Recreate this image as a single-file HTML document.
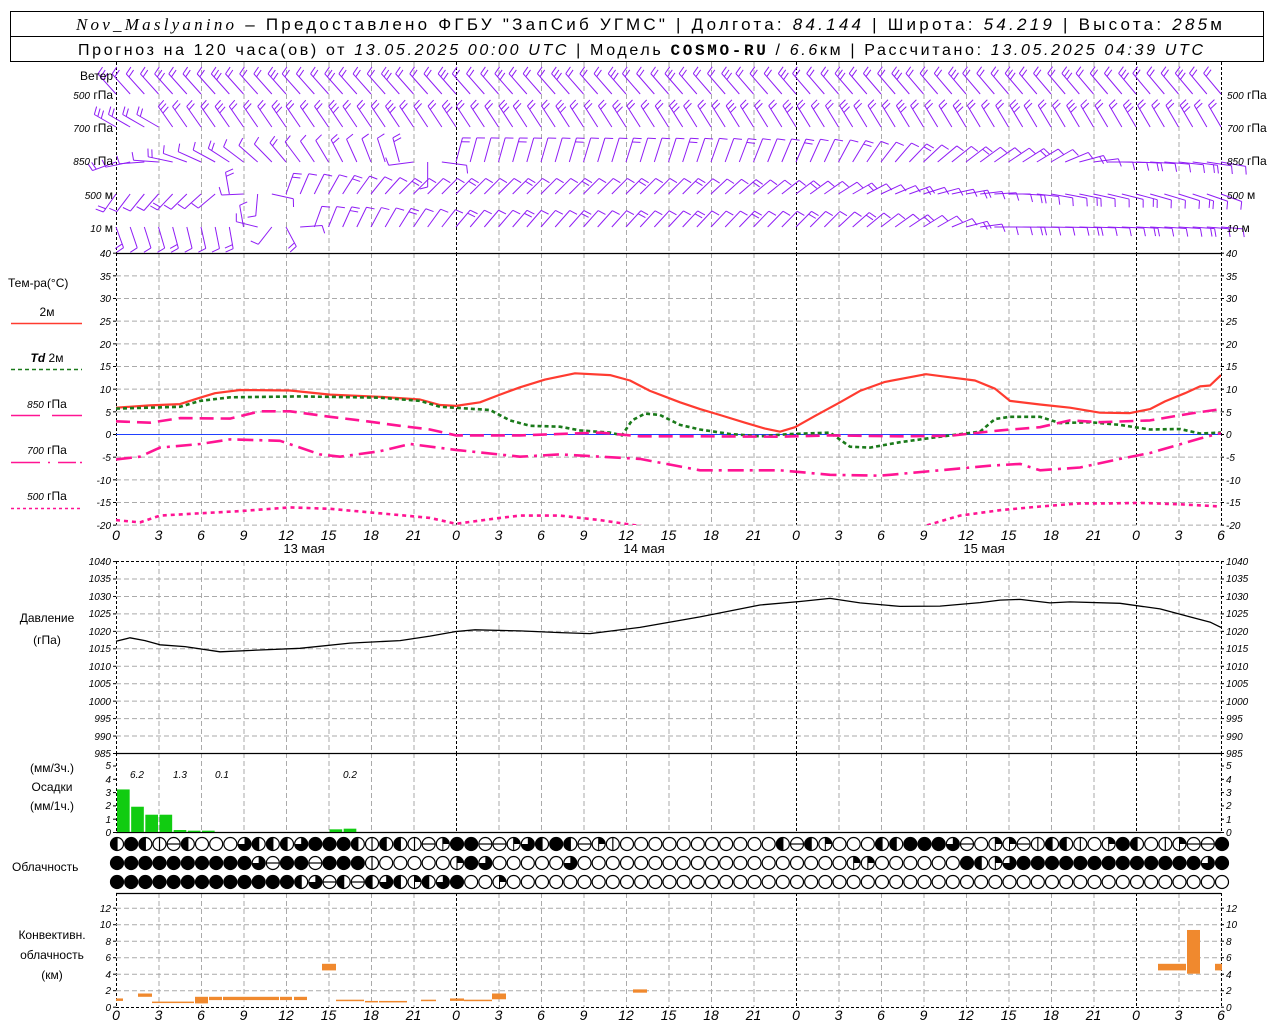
<!DOCTYPE html>
<html><head><meta charset="utf-8">
<style>
html,body{margin:0;padding:0;background:#fff;}
svg{display:block;}
text{font-family:"Liberation Sans","DejaVu Sans",sans-serif;fill:#000;}
.n{font-style:italic;font-size:10px;}
.t{font-style:italic;font-size:14px;text-anchor:middle;}
.l{font-size:12px;}
</style></head><body>
<svg id="s" xmlns="http://www.w3.org/2000/svg" width="1280" height="1024" viewBox="0 0 1280 1024">
<defs><clipPath id="cp"><rect x="116" y="253" width="1105" height="272"/></clipPath></defs>
<rect x="10.5" y="11.5" width="1253" height="50" fill="#fff" stroke="#000"/>
<line x1="10" y1="36.5" x2="1264" y2="36.5" stroke="#000"/>
<text x="76" y="30" font-size="17" textLength="1146" lengthAdjust="spacing"><tspan font-style="italic" font-family="Liberation Serif">Nov_Maslyanino</tspan> – Предоставлено ФГБУ "ЗапСиб УГМС" | Долгота: <tspan font-style="italic">84.144</tspan> | Широта: <tspan font-style="italic">54.219</tspan> | Высота: <tspan font-style="italic">285</tspan>м</text>
<text x="78" y="55" font-size="16" textLength="1125" lengthAdjust="spacing">Прогноз на 120 часа(ов) от <tspan font-style="italic">13.05.2025 00:00 UTC</tspan> | Модель <tspan font-weight="bold" font-family="Liberation Mono">COSMO-RU</tspan> / <tspan font-style="italic">6.6</tspan>км | Рассчитано: <tspan font-style="italic">13.05.2025 04:39 UTC</tspan></text>
<g id="g"></g>
<g class="l">
<text x="113" y="80" text-anchor="end">Ветер</text>
<text x="113" y="99" text-anchor="end"><tspan class="n">500</tspan> гПа</text>
<text x="113" y="132" text-anchor="end"><tspan class="n">700</tspan> гПа</text>
<text x="113" y="165" text-anchor="end"><tspan class="n">850</tspan> гПа</text>
<text x="113" y="199" text-anchor="end"><tspan class="n">500</tspan> м</text>
<text x="113" y="232" text-anchor="end"><tspan class="n">10</tspan>   м</text>
<text x="1227" y="99"><tspan class="n">500</tspan> гПа</text>
<text x="1227" y="132"><tspan class="n">700</tspan> гПа</text>
<text x="1227" y="165"><tspan class="n">850</tspan> гПа</text>
<text x="1227" y="199"><tspan class="n">500</tspan> м</text>
<text x="1227" y="232"><tspan class="n">10</tspan>   м</text>
<text x="8" y="287">Тем-ра(°C)</text>
<text x="47" y="316" text-anchor="middle">2м</text>
<text x="47" y="362" text-anchor="middle"><tspan font-style="italic" font-weight="bold">Td</tspan>  2м</text>
<text x="47" y="408" text-anchor="middle"><tspan class="n">850</tspan> гПа</text>
<text x="47" y="454" text-anchor="middle"><tspan class="n">700</tspan> гПа</text>
<text x="47" y="500" text-anchor="middle"><tspan class="n">500</tspan> гПа</text>
<text x="47" y="622" text-anchor="middle">Давление</text>
<text x="47" y="644" text-anchor="middle">(гПа)</text>
<text x="52" y="772" text-anchor="middle">(мм/3ч.)</text>
<text x="52" y="791" text-anchor="middle">Осадки</text>
<text x="52" y="810" text-anchor="middle">(мм/1ч.)</text>
<text x="12" y="871">Облачность</text>
<text x="52" y="939" text-anchor="middle">Конвективн.</text>
<text x="52" y="959" text-anchor="middle">облачность</text>
<text x="52" y="979" text-anchor="middle">(км)</text>
<text x="304" y="553" text-anchor="middle" font-size="13">13 мая</text>
<text x="644" y="553" text-anchor="middle" font-size="13">14 мая</text>
<text x="984" y="553" text-anchor="middle" font-size="13">15 мая</text>
</g>
<g class="n" font-size="13" font-style="italic">
<text x="137" y="778" text-anchor="middle">6.2</text>
<text x="180" y="778" text-anchor="middle">1.3</text>
<text x="222" y="778" text-anchor="middle">0.1</text>
<text x="350" y="778" text-anchor="middle">0.2</text>
</g>
<g class="n" text-anchor="end">
<text x="111" y="257">40</text><text x="111" y="280">35</text><text x="111" y="302">30</text><text x="111" y="325">25</text><text x="111" y="348">20</text><text x="111" y="370">15</text><text x="111" y="393">10</text><text x="111" y="416">5</text><text x="111" y="438">0</text><text x="111" y="461">-5</text><text x="111" y="484">-10</text><text x="111" y="506">-15</text><text x="111" y="529">-20</text>
<text x="111" y="565">1040</text><text x="111" y="582">1035</text><text x="111" y="600">1030</text><text x="111" y="617">1025</text><text x="111" y="635">1020</text><text x="111" y="652">1015</text><text x="111" y="670">1010</text><text x="111" y="687">1005</text><text x="111" y="705">1000</text><text x="111" y="722">995</text><text x="111" y="740">990</text><text x="111" y="757">985</text>
<text x="111" y="769">5</text><text x="111" y="783">4</text><text x="111" y="796">3</text><text x="111" y="809">2</text><text x="111" y="823">1</text><text x="111" y="836">0</text>
<text x="111" y="912">12</text><text x="111" y="928">10</text><text x="111" y="945">8</text><text x="111" y="961">6</text><text x="111" y="978">4</text><text x="111" y="994">2</text><text x="111" y="1011">0</text>
</g>
<g class="n">
<text x="1226" y="257">40</text><text x="1226" y="280">35</text><text x="1226" y="302">30</text><text x="1226" y="325">25</text><text x="1226" y="348">20</text><text x="1226" y="370">15</text><text x="1226" y="393">10</text><text x="1226" y="416">5</text><text x="1226" y="438">0</text><text x="1226" y="461">-5</text><text x="1226" y="484">-10</text><text x="1226" y="506">-15</text><text x="1226" y="529">-20</text>
<text x="1226" y="565">1040</text><text x="1226" y="582">1035</text><text x="1226" y="600">1030</text><text x="1226" y="617">1025</text><text x="1226" y="635">1020</text><text x="1226" y="652">1015</text><text x="1226" y="670">1010</text><text x="1226" y="687">1005</text><text x="1226" y="705">1000</text><text x="1226" y="722">995</text><text x="1226" y="740">990</text><text x="1226" y="757">985</text>
<text x="1226" y="769">5</text><text x="1226" y="783">4</text><text x="1226" y="796">3</text><text x="1226" y="809">2</text><text x="1226" y="823">1</text><text x="1226" y="836">0</text>
<text x="1226" y="912">12</text><text x="1226" y="928">10</text><text x="1226" y="945">8</text><text x="1226" y="961">6</text><text x="1226" y="978">4</text><text x="1226" y="994">2</text><text x="1226" y="1011">0</text>
</g>
<g class="t">
<text x="116" y="540">0</text><text x="158.5" y="540">3</text><text x="201" y="540">6</text><text x="243.5" y="540">9</text><text x="286" y="540">12</text><text x="328.5" y="540">15</text><text x="371" y="540">18</text><text x="413.5" y="540">21</text><text x="456" y="540">0</text><text x="498.5" y="540">3</text><text x="541" y="540">6</text><text x="583.5" y="540">9</text><text x="626" y="540">12</text><text x="668.5" y="540">15</text><text x="711" y="540">18</text><text x="753.5" y="540">21</text><text x="796" y="540">0</text><text x="838.5" y="540">3</text><text x="881" y="540">6</text><text x="923.5" y="540">9</text><text x="966" y="540">12</text><text x="1008.5" y="540">15</text><text x="1051" y="540">18</text><text x="1093.5" y="540">21</text><text x="1136" y="540">0</text><text x="1178.5" y="540">3</text><text x="1221" y="540">6</text>
<text x="116" y="1020">0</text><text x="158.5" y="1020">3</text><text x="201" y="1020">6</text><text x="243.5" y="1020">9</text><text x="286" y="1020">12</text><text x="328.5" y="1020">15</text><text x="371" y="1020">18</text><text x="413.5" y="1020">21</text><text x="456" y="1020">0</text><text x="498.5" y="1020">3</text><text x="541" y="1020">6</text><text x="583.5" y="1020">9</text><text x="626" y="1020">12</text><text x="668.5" y="1020">15</text><text x="711" y="1020">18</text><text x="753.5" y="1020">21</text><text x="796" y="1020">0</text><text x="838.5" y="1020">3</text><text x="881" y="1020">6</text><text x="923.5" y="1020">9</text><text x="966" y="1020">12</text><text x="1008.5" y="1020">15</text><text x="1051" y="1020">18</text><text x="1093.5" y="1020">21</text><text x="1136" y="1020">0</text><text x="1178.5" y="1020">3</text><text x="1221" y="1020">6</text>
</g>
</svg>
<script>
(function(){
var S='http://www.w3.org/2000/svg',G=document.getElementById('g');
function el(n,a,p){var e=document.createElementNS(S,n);for(var k in a)e.setAttribute(k,a[k]);(p||G).appendChild(e);return e;}
function ln(x1,y1,x2,y2,c,w,d){el('line',{x1:x1,y1:y1,x2:x2,y2:y2,stroke:c,'stroke-width':w||1,'stroke-dasharray':d||'none'});}
var X0=116,DX=14.1667,X1=1221;
function xh(h){return X0+h*DX;}
function ty(v){return 434-v*4.533;}
function py(p){return 753-(p-985)*3.49;}
function cy(k){return 1006.7-k*8.25;}
var panels=[[62,253],[253,525],[561,753],[753,832],[893,1007]];
for(var h=3;h<78;h+=3){if(h%24==0)continue;var x=xh(h)+.5;panels.forEach(function(p){ln(x,p[0],x,p[1],'#aaa',1,'5,3');});}
[0,24,48,72,78].forEach(function(h){var x=xh(h)+.5;panels.forEach(function(p){ln(x,p[0],x,p[1],'#000',1,'3,2');});});
for(var v=35;v>=-20;v-=5){if(v==0)continue;ln(X0,ty(v)+.5,X1,ty(v)+.5,'#aaa',1,'5,3');}
ln(X0,ty(0)+.5,X1,ty(0)+.5,'#2040ff',1);
for(var p=1035;p>985;p-=5)ln(X0,py(p)+.5,X1,py(p)+.5,'#aaa',1,'5,3');
for(var k=2;k<=12;k+=2)ln(X0,cy(k)+.5,X1,cy(k)+.5,'#aaa',1,'5,3');
ln(X0,253.5,X1,253.5,'#000',1.3);ln(X0,561.5,X1,561.5,'#000',1,'3,2');ln(X0,753.5,X1,753.5,'#000',1.3);
ln(X0,832.5,X1,832.5,'#000',1.3);ln(X0,893.5,X1,893.5,'#000',1.3);ln(X0,1007.5,X1,1007.5,'#000',1,'3,2');
function ticks(ys){ys.forEach(function(y){ln(X0-3,y+.5,X0,y+.5,'#000');ln(X1,y+.5,X1+3,y+.5,'#000');});}
var a=[];for(v=40;v>=-20;v-=5)a.push(ty(v));ticks(a);a=[];for(p=1040;p>=985;p-=5)a.push(py(p));ticks(a);
a=[];for(k=0;k<=5;k++)a.push(832-k*13.3);ticks(a);a=[];for(k=0;k<=12;k+=2)a.push(cy(k));ticks(a);
ln(11,323.5,82,323.5,'#ff3b30',1.5);ln(11,369.5,82,369.5,'#1a7a1a',1.5,'4,3');
ln(11,415.5,40,415.5,'#ff1493',1.5);ln(52,415.5,82,415.5,'#ff1493',1.5);
ln(11,462.5,40,462.5,'#ff1493',1.5);ln(48,462.5,50,462.5,'#ff1493',1.5);ln(58,462.5,76,462.5,'#ff1493',1.5);ln(80,462.5,82,462.5,'#ff1493',1.5);
ln(11,508.5,82,508.5,'#ff1493',1.5,'3,3');
function curve(pts,f,c,w,d,clip){var s='';pts.forEach(function(q,i){s+=(i?'L':'M')+q[0]+','+f(q[1]).toFixed(1);});var e=el('path',{d:s,fill:'none',stroke:c,'stroke-width':w,'stroke-dasharray':d||'none','stroke-linejoin':'round'});if(clip)e.setAttribute('clip-path','url(#cp)');}
curve([[116,5.8],[150,6.3],[180,6.6],[200,8],[215,9],[240,9.7],[290,9.6],[330,8.7],[380,8.2],[420,7.6],[440,6.4],[456,6.2],[480,7],[500,8.7],[520,10.3],[545,12],[575,13.4],[610,13],[630,11.8],[650,9.5],[680,7],[700,5.5],[720,4.2],[745,2.5],[765,1.2],[780,0.5],[795,1.5],[815,4],[840,7],[860,9.5],[885,11.5],[926,13.2],[950,12.5],[975,11.8],[995,10],[1010,7.3],[1040,6.5],[1070,5.8],[1100,4.7],[1130,4.6],[1150,5.5],[1165,7.2],[1185,9],[1200,10.5],[1210,10.7],[1221,13]],ty,'#ff3b30',2.2,null,1);
curve([[116,5.6],[180,6],[200,7.3],[230,8.1],[300,8.3],[380,8],[420,7.3],[440,6],[490,5.3],[510,3],[530,1.8],[560,1.6],[580,0.8],[610,0.3],[622,-0.3],[632,3],[645,4.5],[660,4.2],[680,2],[700,1],[730,0],[760,-0.5],[790,0],[830,0.3],[850,-2.8],[870,-3],[900,-1.8],[940,-0.6],[980,0.5],[995,3.3],[1010,3.8],[1040,3.8],[1060,2.4],[1090,2.6],[1120,2],[1150,1],[1180,1.1],[1200,0.1],[1221,0.3]],ty,'#1a7a1a',2.6,'4,3',1);
curve([[116,2.8],[150,2.5],[180,3.5],[230,3.4],[260,5],[290,5],[330,3.8],[360,3],[400,1.8],[430,1],[456,-0.3],[520,-0.3],[600,0.3],[640,-0.5],[700,-0.5],[780,-0.6],[830,-0.3],[900,-0.5],[950,-0.4],[1000,0.8],[1040,1.5],[1070,3],[1100,2.6],[1150,3],[1190,4.5],[1221,5.5]],ty,'#ff1493',2.6,'14,7',1);
curve([[116,-5.6],[140,-5],[160,-3],[200,-2.2],[230,-1.2],[280,-1.5],[320,-4.5],[340,-5],[380,-3.8],[410,-2.2],[456,-3.5],[520,-5],[560,-4.5],[640,-5.5],[700,-8],[780,-8],[830,-9],[880,-9.2],[940,-8],[990,-7],[1020,-6.6],[1040,-8],[1080,-7.4],[1120,-5.5],[1150,-4.2],[1200,-1],[1221,0.2]],ty,'#ff1493',2.6,'16,6,3,6',1);
curve([[116,-19],[140,-19.5],[160,-18],[200,-17.5],[240,-17],[290,-16.2],[330,-16.5],[380,-17.5],[430,-18.5],[456,-19.8],[500,-18.5],[520,-18],[560,-18],[600,-19],[640,-20.3],[700,-22],[880,-22],[926,-20.2],[960,-18],[1000,-16.8],[1040,-16],[1080,-15.3],[1110,-15.3],[1140,-15.2],[1180,-15.5],[1221,-16]],ty,'#ff1493',2.6,'4,4',1);
curve([[116,1017],[130,1018],[145,1017.2],[160,1016],[185,1015.5],[220,1014],[260,1014.5],[300,1015],[350,1016.5],[400,1017.2],[430,1018.5],[456,1019.8],[475,1020.3],[520,1020],[560,1019.5],[590,1019.2],[640,1021],[700,1024],[760,1027.4],[800,1028.4],[830,1029.3],[860,1028],[900,1027],[940,1027.1],[980,1028.1],[1000,1028.8],[1020,1029],[1050,1028],[1070,1028.3],[1120,1027.9],[1160,1026.3],[1190,1024],[1210,1022.5],[1221,1021]],py,'#000',1.3);
[[0,3.2],[1,1.9],[2,1.3],[3,1.3],[4,0.15],[5,0.1],[6,0.1],[15,0.2],[16,0.25]].forEach(function(b){var h2=b[1]*13.3;el('rect',{x:xh(b[0])+1,y:832-h2,width:DX-1.5,height:h2,fill:'#11cc11'});});
[[116,123,0.7,1],[138,152,1.2,1.6],[152,194,0.5,0.62],[195,208,0.4,1.2],[209,222,0.8,1.2],[223,279,0.8,1.2],[280,292,0.8,1.2],[294,307,0.8,1.2],[322,336,4.4,5.2],[336,364,0.7,0.85],[365,378,0.55,0.7],[379,407,0.55,0.7],[421,436,0.7,0.85],[450,464,0.7,1],[464,492,0.7,0.85],[492,506,0.9,1.6],[633,647,1.7,2.1],[1158,1186,4.4,5.2],[1187,1200,4,9.3],[1215,1222,4.4,5.2]].forEach(function(b){el('rect',{x:b[0],y:cy(b[3]),width:b[1]-b[0],height:Math.max(1.5,(b[3]-b[2])*8.25),fill:'#f0892e'});});
var rows=['HFHITHOOOQHHHQFFFHIHHITqFFTTqQHFHTqIOOOOOOOOOOOHTHqOOOHHFFFQTOqqTIHHIOqFHOIqTTF',
'FFFFFFFFFFQTFFTFFFIOOOOOqFQOOOOOQOOOOOOOOOOOOOOOOOOOqqOOOOOOFHqQFFFFFFFFFFFFFQF',
'FFFFFFFFFFFFFHQTHTHQHqHQFOOqOOOOOOOOOOOOOOOOOOOOOOOOOOOOOOOOOOOOOOOOOOOOOOOOOOO'];
var ry=[844,863,882],r=6.5;
rows.forEach(function(s,ri){for(var i=0;i<79;i++){var c=s.charAt(i)||'O',x=xh(i)+1,y=ry[ri];
el('circle',{cx:x,cy:y,r:r,fill:c=='F'?'#000':'#fff',stroke:'#000','stroke-width':1.2});
if(c=='H'){el('path',{d:'M'+x+','+(y-r)+'A'+r+','+r+' 0 0 0 '+x+','+(y+r)+'Z',fill:'#000'});}
if(c=='I'||c=='H')ln(x,y-r,x,y+r,'#000',1.2);
if(c=='T')ln(x-r,y,x+r,y,'#000',1.2);
if(c=='Q'){el('path',{d:'M'+x+','+y+'L'+x+','+(y-r)+'A'+r+','+r+' 0 1 1 '+(x-r)+','+y+'Z',fill:'#000'});}
if(c=='q'){el('path',{d:'M'+x+','+y+'L'+x+','+(y-r)+'A'+r+','+r+' 0 0 1 '+(x+r)+','+y+'Z',fill:'#000'});ln(x,y-r,x,y+r,'#000',1);}
}});
function itp(k,h){for(var i=0;i<k.length-1;i++){if(h<=k[i+1][0]){var t=(h-k[i][0])/(k[i+1][0]-k[i][0]);return k[i][1]+t*(k[i+1][1]-k[i][1]);}}return k[k.length-1][1];}
var L=[
{y:94,d:[[0,318],[78,320]],n:[[0,2],[78,2]],len:27},
{y:127,d:[[0,300],[3,300],[4,325],[40,328],[78,330]],n:[[0,2],[78,2]],len:25},
{y:162,d:[[0,250],[5,290],[12,320],[20,345],[24,15],[40,18],[50,25],[58,50],[66,60],[70,90],[78,100]],n:[[0,1],[78,1]],len:25},
{y:194,d:[[0,215],[7,230],[8,350],[12,20],[20,45],[40,45],[50,55],[60,80],[66,100],[78,110]],n:[[0,1],[78,1]],len:22},
{y:227,d:[[0,160],[8,170],[9,350],[14,20],[24,40],[50,45],[58,60],[62,90],[78,95]],n:[[0,1],[78,1]],len:22}];
L.forEach(function(lv){for(var h=0;h<=78;h++){var d=itp(lv.d,h)*Math.PI/180,sx=Math.sin(d),sy=-Math.cos(d),x=xh(h),y=lv.y;
var tx=x+lv.len*sx,tyy=y+lv.len*sy;ln(x,y,tx,tyy,'#8f1cf5',1);
var n=Math.round(itp(lv.n,h))+((h*7)%4==0?1:0);var px=-sy,pyy=sx;
for(var k=0;k<n;k++){var bx=tx-k*4*sx,by=tyy-k*4*sy;ln(bx,by,bx+8*px+2*sx,by+8*pyy+2*sy,'#8f1cf5',1);}
}});
})();
</script>
</body></html>
